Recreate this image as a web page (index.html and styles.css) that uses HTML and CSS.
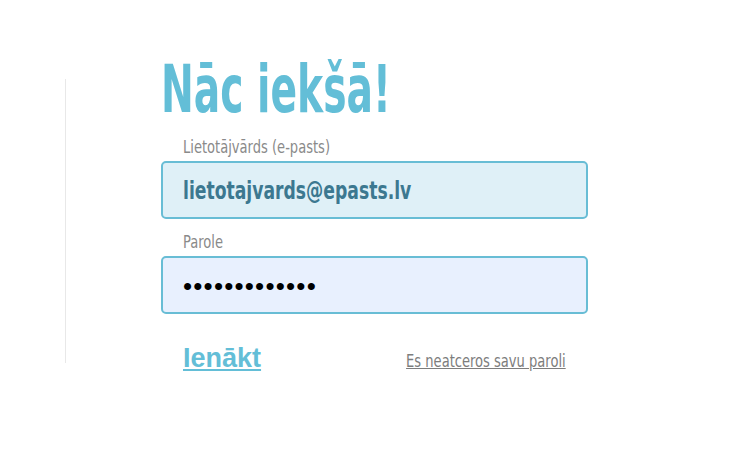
FILE: index.html
```
<!DOCTYPE html>
<html lang="lv">
<head>
<meta charset="utf-8">
<link rel="stylesheet" href="styles.css">
</head>
<body>
<div class="page">
  <div class="divider"></div>
  <form class="login">
    <h1 class="title"><span class="narrow narrow-title">Nāc iekšā!</span></h1>
    <label class="label"><span class="narrow narrow-label">Lietotājvārds (e-pasts)</span></label>
    <div class="field field-user"><span class="narrow narrow-user">lietotajvards@epasts.lv</span></div>
    <label class="label label-pass"><span class="narrow narrow-label">Parole</span></label>
    <div class="field field-pass">•••••••••••••</div>
    <div class="actions">
      <a class="submit" href="#">Ienākt</a>
      <a class="forgot" href="#"><span class="narrow narrow-forgot">Es neatceros savu paroli</span></a>
    </div>
  </form>
</div>
</body>
</html>
```
FILE: styles.css
```
html, body { margin: 0; padding: 0; background: #fff; }
body { width: 741px; height: 456px; overflow: hidden; font-family: "DejaVu Sans Condensed", "DejaVu Sans", sans-serif; }
.page { display: flex; padding-top: 79px; }
.divider { width: 1px; height: 284px; background: #e8e8e8; margin-left: 65px; }
.login { display: flex; flex-direction: column; margin-left: 95px; margin-top: -29px; width: 427px; }
.narrow { display: inline-block; white-space: nowrap; transform-origin: left center; }
.narrow-title { transform: scaleX(0.66); }
.narrow-label { transform: scaleX(0.855); }
.narrow-user { transform: scaleX(0.765); }
.narrow-forgot { transform: scaleX(0.855); transform-origin: right center; text-decoration: underline; }
.title { margin: 0; font-size: 66px; font-weight: bold; color: #63bed7; line-height: 80px; }
.label { font-size: 17px; color: #8a8a8a; padding-left: 22px; line-height: 20px; margin-top: 7px; }
.label-pass { margin-top: 13px; }
.field { box-sizing: border-box; height: 58px; margin-top: 4px; border: 2px solid #68bdd5; border-radius: 5px; padding-left: 20px; display: flex; align-items: center; }
.field-user { background: #dff0f7; color: #3c7890; font-weight: bold; font-size: 25px; }
.field-pass { background: #e8f0fe; color: #000; font-family: "Liberation Sans", sans-serif; font-size: 26px; letter-spacing: 1.2px; padding-top: 3px; }
.actions { display: flex; justify-content: space-between; align-items: baseline; padding-left: 22px; padding-right: 22px; margin-top: 29px; }
.submit { font-family: "Liberation Sans", sans-serif; font-weight: bold; font-size: 27px; color: #63bed7; }
.forgot { font-size: 17px; color: #7d7d7d; }
```
